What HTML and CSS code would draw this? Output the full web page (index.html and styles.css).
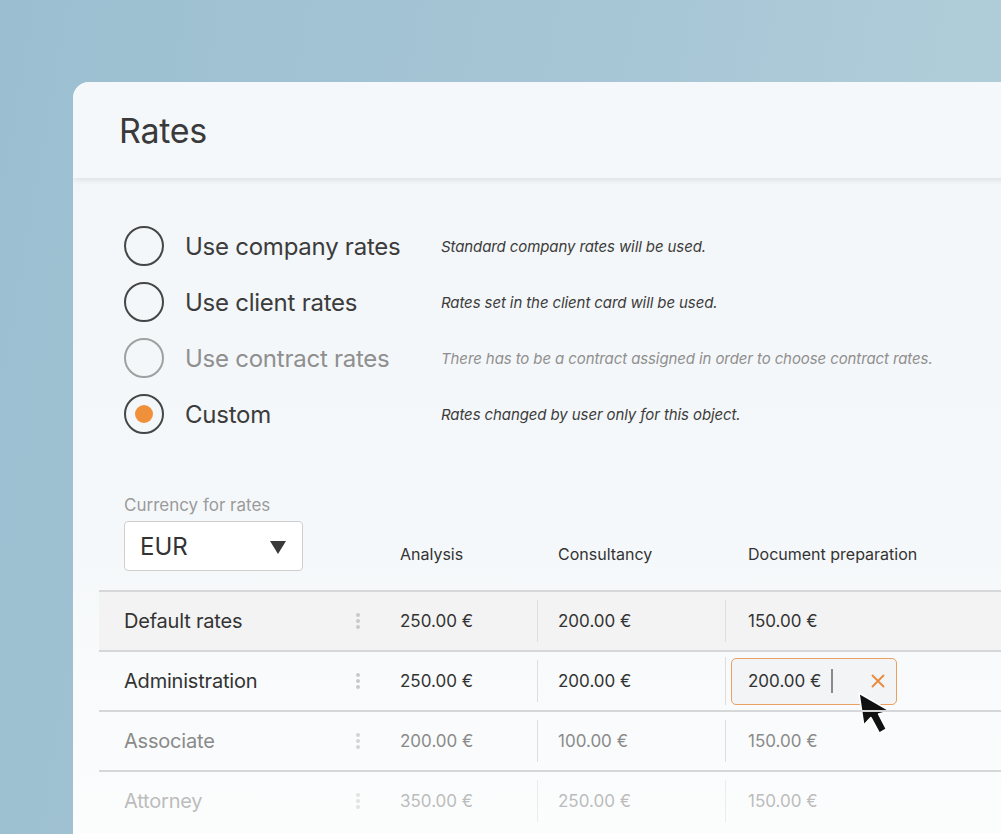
FILE: index.html
```html
<!DOCTYPE html>
<html lang="en">
<head>
  <meta charset="UTF-8" />
  <meta name="viewport" content="width=device-width, initial-scale=1" />
  <title>Rates</title>
  <link rel="stylesheet" href="styles.css">
</head>
<body>
  <div class="card">
    <div class="card-header">
      <h1>Rates</h1>
    </div>

    <div class="card-body">
      <div class="options">
        <div class="option">
          <span class="radio"></span>
          <span class="option-label">Use company rates</span>
          <span class="option-desc">Standard company rates will be used.</span>
        </div>
        <div class="option">
          <span class="radio"></span>
          <span class="option-label">Use client rates</span>
          <span class="option-desc">Rates set in the client card will be used.</span>
        </div>
        <div class="option disabled">
          <span class="radio"></span>
          <span class="option-label">Use contract rates</span>
          <span class="option-desc">There has to be a contract assigned in order to choose contract rates.</span>
        </div>
        <div class="option">
          <span class="radio checked"></span>
          <span class="option-label">Custom</span>
          <span class="option-desc">Rates changed by user only for this object.</span>
        </div>
      </div>

      <div class="rates-table">
        <div class="table-head">
          <div class="currency">
            <label class="currency-label">Currency for rates</label>
            <div class="select">
              <span>EUR</span>
              <svg width="16" height="14" viewBox="0 0 16 14"><path d="M0 1h16L8 14z" fill="#3a3a3a"/></svg>
            </div>
          </div>
          <div class="col-head">Analysis</div>
          <div class="col-head">Consultancy</div>
          <div class="col-head">Document preparation</div>
        </div>

        <div class="row default">
          <div class="row-name">Default rates</div>
          <div class="dots"><svg width="4" height="16" viewBox="0 0 4 16"><circle cx="2" cy="2" r="2"/><circle cx="2" cy="8" r="2"/><circle cx="2" cy="14" r="2"/></svg></div>
          <div class="cell">250.00 €</div>
          <div class="cell">200.00 €</div>
          <div class="cell last">150.00 €</div>
        </div>

        <div class="row">
          <div class="row-name">Administration</div>
          <div class="dots"><svg width="4" height="16" viewBox="0 0 4 16"><circle cx="2" cy="2" r="2"/><circle cx="2" cy="8" r="2"/><circle cx="2" cy="14" r="2"/></svg></div>
          <div class="cell">250.00 €</div>
          <div class="cell">200.00 €</div>
          <div class="cell last editing">
            <div class="edit-field">
              <span>200.00 €</span>
              <span class="caret"></span>
              <svg class="clear" width="14" height="14" viewBox="0 0 14 14"><path d="M1.5 1.5l11 11M12.5 1.5l-11 11" stroke="#ea8a3c" stroke-width="1.8" stroke-linecap="round"/></svg>
            </div>
            <svg class="pointer" width="38" height="48" viewBox="0 0 31.5 40"><path d="M4 5L8 32L14 25.5L21 38.5L27 35L20.5 22.5L30 20Z" fill="#111" stroke="#fff" stroke-width="1.4" stroke-linejoin="round"/></svg>
          </div>
        </div>

        <div class="row faded">
          <div class="row-name">Associate</div>
          <div class="dots"><svg width="4" height="16" viewBox="0 0 4 16"><circle cx="2" cy="2" r="2"/><circle cx="2" cy="8" r="2"/><circle cx="2" cy="14" r="2"/></svg></div>
          <div class="cell">200.00 €</div>
          <div class="cell">100.00 €</div>
          <div class="cell last">150.00 €</div>
        </div>

        <div class="row faded more">
          <div class="row-name">Attorney</div>
          <div class="dots"><svg width="4" height="16" viewBox="0 0 4 16"><circle cx="2" cy="2" r="2"/><circle cx="2" cy="8" r="2"/><circle cx="2" cy="14" r="2"/></svg></div>
          <div class="cell">350.00 €</div>
          <div class="cell">250.00 €</div>
          <div class="cell last">150.00 €</div>
        </div>
      </div>
    </div>
  </div>
</body>
</html>
```

FILE: styles.css
```css
* {
  margin: 0;
  padding: 0;
  box-sizing: border-box;
}

body {
  height: 834px;
  overflow: hidden;
  padding: 82px 0 0 73px;
  background: linear-gradient(100deg, #9bbfd1 0%, #a7c6d5 55%, #b3cfdb 100%);
  font-family: Inter, 'Liberation Sans', sans-serif;
  color: #3a3a3a;
}

.card {
  width: 1000px;
  height: 760px;
  border-radius: 16px 0 0 0;
  overflow: hidden;
  background: linear-gradient(180deg, #f3f6f8 0%, #f5f8fa 60%, #fcfdfd 100%);
}

.card-header {
  height: 96px;
  display: flex;
  align-items: center;
  padding-left: 46px;
  background: #f5f8fa;
  box-shadow: 0 2px 6px rgba(0, 0, 0, 0.09);
  position: relative;
  z-index: 1;
}

.card-header h1 {
  font-size: 34px;
  font-weight: 400;
  color: #3a3a3a;
  letter-spacing: -0.3px;
}

.card-body {
  padding-top: 48px;
}

.options {
  display: flex;
  flex-direction: column;
  gap: 16px;
  padding-left: 51px;
}

.option {
  display: flex;
  align-items: center;
  height: 40px;
}

.radio {
  width: 40px;
  height: 40px;
  border-radius: 50%;
  border: 2.5px solid #464646;
  flex-shrink: 0;
  display: flex;
  align-items: center;
  justify-content: center;
}

.radio.checked::after {
  content: "";
  width: 18px;
  height: 18px;
  border-radius: 50%;
  background: #f0903b;
}

.option-label {
  width: 277px;
  flex-shrink: 0;
  padding-left: 21px;
  font-size: 24px;
  letter-spacing: -0.25px;
  color: #3c3c3c;
}

.option-desc {
  font-size: 15px;
  font-style: italic;
  letter-spacing: -0.1px;
  color: #3c3c3c;
}

.option.disabled .radio {
  border-color: #a0a0a0;
}

.option.disabled .option-label,
.option.disabled .option-desc {
  color: #8f8f8f;
}

.rates-table {
  margin-top: 61px;
  margin-left: 26px;
}

.table-head,
.row {
  display: grid;
  grid-template-columns: 235px 48px 156px 188px 1fr;
}

.table-head {
  align-items: end;
  padding-bottom: 19px;
}

.currency {
  grid-column: 1 / 3;
  padding-left: 25px;
}

.currency-label {
  display: block;
  font-size: 17px;
  color: #9b9b9b;
  margin-bottom: 6px;
}

.select {
  width: 179px;
  height: 50px;
  background: #fff;
  border: 1px solid #cfcfcf;
  border-radius: 4px;
  display: flex;
  align-items: center;
  justify-content: space-between;
  padding: 0 16px 0 15px;
  font-size: 24px;
  color: #333;
}

.select svg {
  margin-top: 2px;
}

.col-head {
  font-size: 16px;
  color: #333;
  padding-bottom: 7px;
}

.col-head:nth-child(2) { padding-left: 18px; }
.col-head:nth-child(3) { padding-left: 20px; }
.col-head:nth-child(4) { padding-left: 22px; }

.row {
  height: 60px;
  border-top: 2px solid #d6d7d8;
  align-items: center;
  position: relative;
}

.row.default {
  background: #f3f3f3;
}

.row-name {
  padding-left: 25px;
  font-size: 20px;
  letter-spacing: -0.2px;
  color: #333;
}

.dots {
  display: flex;
  justify-content: center;
  fill: #c9c9c9;
}

.cell {
  height: 42px;
  display: flex;
  align-items: center;
  font-size: 17px;
  color: #333;
  border-right: 1px solid #dedede;
}

.cell:nth-child(3) { padding-left: 18px; }
.cell:nth-child(4) { padding-left: 20px; }

.cell.last {
  border-right: none;
  padding-left: 22px;
  border-left: 1px solid #dedede;
  margin-left: -1px;
}

.cell.editing {
  padding-left: 5px;
  height: 48px;
  position: relative;
}

.edit-field {
  width: 166px;
  height: 47px;
  border: 1px solid #e9a061;
  border-radius: 5px;
  background: #f2f4f6;
  display: flex;
  align-items: center;
  padding-left: 16px;
  font-size: 17px;
  color: #333;
}

.caret {
  width: 2px;
  height: 24px;
  background: #8a8a8a;
  margin-left: 10px;
}

.clear {
  margin-left: 38px;
}

.pointer {
  position: absolute;
  left: 128px;
  top: 30px;
}

.row.faded .row-name,
.row.faded .cell {
  color: #8a8a8a;
}

.row.faded .dots {
  fill: #d4d4d4;
}

.row.faded.more .row-name,
.row.faded.more .cell {
  color: #bcbcbc;
}

.row.faded.more .dots {
  fill: #e2e2e2;
}

.row.faded.more .cell {
  border-color: #ececec;
}
```
